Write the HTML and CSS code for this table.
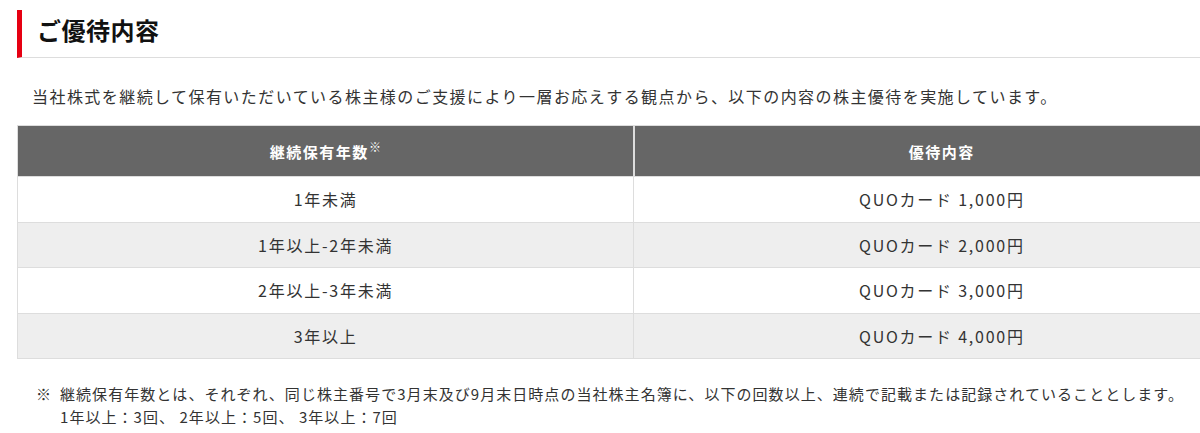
FILE: index.html
```html
<!DOCTYPE html>
<html lang="ja">
<head>
<meta charset="utf-8">
<title>ご優待内容</title>
<link rel="stylesheet" href="styles.css">
</head>
<body>
<section class="benefit">
  <h2 class="benefit-title">ご優待内容</h2>
  <p class="benefit-lead">当社株式を継続して保有いただいている株主様のご支援により一層お応えする観点から、以下の内容の株主優待を実施しています。</p>
  <table class="benefit-table">
    <thead>
      <tr><th>継続保有年数<sup>※</sup></th><th>優待内容</th></tr>
    </thead>
    <tbody>
      <tr><td>1年未満</td><td>QUOカード 1,000円</td></tr>
      <tr><td>1年以上-2年未満</td><td>QUOカード 2,000円</td></tr>
      <tr><td>2年以上-3年未満</td><td>QUOカード 3,000円</td></tr>
      <tr><td>3年以上</td><td>QUOカード 4,000円</td></tr>
    </tbody>
  </table>
  <div class="benefit-note">
    <span class="note-mark">※</span>
    <div class="note-body">
      <p>継続保有年数とは、それぞれ、同じ株主番号で3月末及び9月末日時点の当社株主名簿に、以下の回数以上、連続で記載または記録されていることとします。</p>
      <p>1年以上：3回、 2年以上：5回、 3年以上：7回</p>
    </div>
  </div>
</section>
</body>
</html>
```

FILE: styles.css
```css
html, body {
  margin: 0;
  padding: 0;
  overflow: hidden;
  background: #fff;
}
body {
  font-family: "Noto Sans CJK JP", "Noto Sans", sans-serif;
  color: #333;
}
.benefit {
  padding: 10px 0 0 17px;
}
.benefit-title {
  margin: 0;
  height: 47px;
  border-left: 5px solid #e60012;
  border-bottom: 1px solid #dddddd;
  padding-left: 15px;
  font-size: 24px;
  font-weight: bold;
  line-height: 40px;
  letter-spacing: 0.02em;
  color: #111;
}
.benefit-lead {
  margin: 26px 0 0 15px;
  font-size: 16px;
  line-height: 24px;
  letter-spacing: 0.09em;
  color: #333;
}
.benefit-table {
  margin-top: 17px;
  width: 1234px;
  table-layout: fixed;
  border-collapse: collapse;
  border: 1px solid #dddddd;
}
.benefit-table th,
.benefit-table td {
  border: 1px solid #dddddd;
  text-align: center;
}
.benefit-table th {
  background: #666666;
  color: #fff;
  font-weight: bold;
  font-size: 15px;
  letter-spacing: 0.1em;
  height: 50px;
  padding: 0;
  border-color: #dddddd;
  border-width: 0 2px 0 0;
}
.benefit-table th sup {
  font-size: 12px;
  vertical-align: 6px;
  line-height: 0;
  letter-spacing: 0;
}
.benefit-table td {
  height: 44.5px;
  padding: 0;
  font-size: 16px;
  letter-spacing: 0.11em;
  color: #333;
}
.benefit-table tbody tr:nth-child(even) td {
  background: #eeeeee;
}
.benefit-note {
  display: flex;
  gap: 10px;
  margin: 23px 0 0 19px;
  font-size: 15px;
  line-height: 23px;
  letter-spacing: 0.07em;
  color: #333;
}
.note-mark {
  width: 14px;
}
.note-body p {
  margin: 0;
}
```
